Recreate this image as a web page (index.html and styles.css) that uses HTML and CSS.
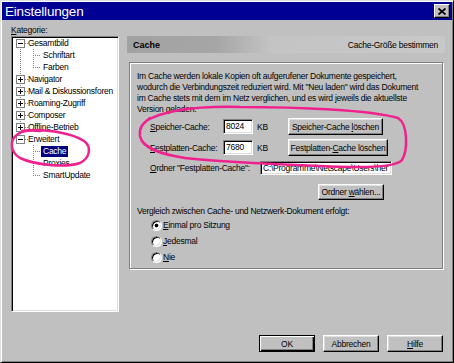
FILE: index.html
```html
<!DOCTYPE html>
<html lang="de">
<head>
    <meta charset="UTF-8">
    <title>Einstellungen</title>
    <link rel="stylesheet" href="styles.css">
</head>
<body>
<div class="window">
    <div class="titlebar">
        <span class="title">Einstellungen</span>
        <span class="close">
            <svg width="8" height="7" viewBox="0 0 8 7"><path d="M0.5 0.5 L7.5 6.5 M7.5 0.5 L0.5 6.5" stroke="#000" stroke-width="1.7"/></svg>
        </span>
    </div>

    <div class="main">
        <div class="left">
            <div class="label"><u>K</u>ategorie:</div>
            <div class="tree">
                <div class="row"><span class="gut root first"><span class="box"></span></span>Gesamtbild</div>
                <div class="row"><span class="gut line"></span><span class="gut2 mid"></span>Schriftart</div>
                <div class="row"><span class="gut line"></span><span class="gut2 last"></span>Farben</div>
                <div class="row"><span class="gut root"><span class="box plus"></span></span>Navigator</div>
                <div class="row"><span class="gut root"><span class="box plus"></span></span>Mail &amp; Diskussionsforen</div>
                <div class="row"><span class="gut root"><span class="box plus"></span></span>Roaming-Zugriff</div>
                <div class="row"><span class="gut root"><span class="box plus"></span></span>Composer</div>
                <div class="row"><span class="gut root"><span class="box plus"></span></span>Offline-Betrieb</div>
                <div class="row"><span class="gut root end"><span class="box"></span></span>Erweitert</div>
                <div class="row"><span class="gut"></span><span class="gut2 mid"></span><span class="selected">Cache</span></div>
                <div class="row"><span class="gut"></span><span class="gut2 mid"></span>Proxies</div>
                <div class="row"><span class="gut"></span><span class="gut2 last"></span>SmartUpdate</div>
            </div>
        </div>

        <div class="right">
            <div class="header">
                <b>Cache</b>
                <span>Cache-Größe bestimmen</span>
            </div>
            <div class="group">
                <div class="desc">
                    Im Cache werden lokale Kopien oft aufgerufener Dokumente gespeichert,<br>
                    wodurch die Verbindungszeit reduziert wird. Mit "Neu laden" wird das Dokument<br>
                    im Cache stets mit dem im Netz verglichen, und es wird jeweils die aktuellste<br>
                    Version geladen.
                </div>
                <div class="field first">
                    <span class="field-label"><u>S</u>peicher-Cache:</span>
                    <span class="input small">8024</span>
                    <span class="unit">KB</span>
                    <span class="btn w95"><span>Speicher-Cache <u>l</u>öschen</span></span>
                </div>
                <div class="field second">
                    <span class="field-label"><u>F</u>estplatten-Cache:</span>
                    <span class="input small">7680</span>
                    <span class="unit">KB</span>
                    <span class="btn w100"><span>Festplatten-<u>C</u>ache löschen</span></span>
                </div>
                <div class="field folder">
                    <span class="field-label wide"><u>O</u>rdner "Festplatten-Cache":</span>
                    <span class="input path">C:\Programme\Netscape\Users\her</span>
                </div>
                <div class="field choose">
                    <span class="btn w66"><span>Ordner <u>w</u>ählen...</span></span>
                </div>
                <div class="compare">Vergleich zwischen Cache- und Netzwerk-Dokument erfolgt:</div>
                <div class="option"><span class="radio checked"></span><span><u>E</u>inmal pro Sitzung</span></div>
                <div class="option"><span class="radio"></span><span><u>J</u>edesmal</span></div>
                <div class="option"><span class="radio"></span><span><u>N</u>ie</span></div>
            </div>
        </div>
    </div>

    <div class="footer">
        <span class="btn default"><span>OK</span></span>
        <span class="btn"><span>Abbrechen</span></span>
        <span class="btn"><span><u>H</u>ilfe</span></span>
    </div>
</div>

<!-- pink marker scribbles drawn over the screenshot -->
<svg class="marks" width="454" height="363" viewBox="0 0 454 363">
    <path d="M22 131 C40 128, 70 132, 84 141 C92 147, 90 158, 80 163 C65 168, 35 165, 20 158 C10 152, 9 140, 18 134 C24 130, 32 130, 40 131"/>
    <path d="M146 121 C165 110, 200 106, 240 107 C300 107, 370 110, 398 118 C408 124, 408 150, 402 160 C396 168, 360 168, 320 166 C270 164, 220 162, 185 158 C160 154, 142 148, 140 136 C139 128, 142 124, 150 118"/>
</svg>
</body>
</html>
```

FILE: styles.css
```css
* { box-sizing: border-box; }
body { margin: 0; background: #c0c0c0; font-family: "Liberation Sans", Arial, sans-serif; font-size: 8.5px; letter-spacing: -0.25px; color: #000; position: relative; }
u { text-decoration: underline; text-underline-offset: 1px; }

.window { width: 454px; height: 363px; padding: 1px; border: 1px solid; border-color: #dfdfdf #000 #000 #dfdfdf; box-shadow: inset 1px 1px #fff, inset -1px -1px #808080; display: flex; flex-direction: column; overflow: hidden; }

.titlebar { height: 18px; background: #000094; color: #fff; display: flex; align-items: center; justify-content: space-between; padding: 0 2px 0 3px; }
.title { font-size: 13.5px; letter-spacing: -0.2px; }
.close { width: 16px; height: 14px; background: #c0c0c0; border: 1px solid; border-color: #fff #000 #000 #fff; box-shadow: inset -1px -1px #808080; display: flex; align-items: center; justify-content: center; }
.close svg { display: block; }

.main { display: flex; gap: 8px; padding: 4px 7px 0 9px; }
.left { width: 108px; }
.label { line-height: 12px; height: 12px; }

.tree { height: 276px; background: #fff; border: 1px solid; border-color: #808080 #fff #fff #808080; box-shadow: inset 1px 1px #000, inset -1px -1px #dfdfdf; padding: 0 1px 0 3px; }
.row { display: flex; height: 12px; line-height: 12px; white-space: nowrap; }
.gut, .gut2 { flex: none; height: 12px; background-repeat: no-repeat; }
.gut { width: 13px; display: flex; align-items: flex-start; }
.gut2 { width: 15px; }

.gut.line { background-image: repeating-linear-gradient(#808080 0 1px, transparent 1px 2px); background-position: 5px 0; background-size: 1px 12px; }
.gut.root { background-image: repeating-linear-gradient(#808080 0 1px, transparent 1px 2px), repeating-linear-gradient(to right, #808080 0 1px, transparent 1px 2px); background-position: 5px 0, 10px 6px; background-size: 1px 12px, 3px 1px; }
.gut.root.first { background-position: 5px 6px, 10px 6px; background-size: 1px 6px, 3px 1px; }
.gut.root.end { background-position: 5px 0, 10px 6px; background-size: 1px 6px, 3px 1px; }
.gut2.mid { background-image: repeating-linear-gradient(#808080 0 1px, transparent 1px 2px), repeating-linear-gradient(to right, #808080 0 1px, transparent 1px 2px); background-position: 5px 0, 5px 6px; background-size: 1px 12px, 7px 1px; }
.gut2.last { background-image: repeating-linear-gradient(#808080 0 1px, transparent 1px 2px), repeating-linear-gradient(to right, #808080 0 1px, transparent 1px 2px); background-position: 5px 0, 5px 6px; background-size: 1px 6px, 7px 1px; }

.box { width: 9px; height: 9px; margin: 2px 0 0 1px; border: 1px solid #808080; background: #fff linear-gradient(#000, #000) center / 5px 1px no-repeat; }
.box.plus { background: linear-gradient(#000, #000) center / 5px 1px no-repeat, linear-gradient(#000, #000) center / 1px 5px no-repeat, #fff; }
.selected { background: #000080; color: #fff; padding: 0 2px; margin-left: -2px; line-height: 11px; height: 11px; margin-top: 1px; }

.right { width: 318px; margin-top: 12px; }
.header { height: 17px; display: flex; align-items: center; justify-content: space-between; padding: 0 7px 0 6px; background: linear-gradient(to right, #a2a2a2 0%, #a6a6a6 28%, #c4c4c4 46%, #c8c8c8 100%); }
.header b { font-size: 9px; letter-spacing: 0; }

.group { margin: 9px 2px 0; border: 1px solid #808080; box-shadow: inset 1px 1px #fff, 1px 1px #fff; padding: 8px 7px 3px; }
.desc { line-height: 11px; white-space: nowrap; }

.field { display: flex; align-items: center; padding-left: 13px; height: 17px; white-space: nowrap; }
.field.first { margin-top: 3px; }
.field.second { margin-top: 4px; }
.field.folder { margin-top: 5px; height: 14px; }
.field.choose { margin-top: 9px; height: 16px; padding-left: 181px; }
.field-label { width: 73px; }
.field-label.wide { width: 110px; }
.unit { width: 35px; padding-left: 4px; }

.input { background: #fff; border: 1px solid; border-color: #808080 #fff #fff #808080; box-shadow: inset 1px 1px #000, inset -1px -1px #dfdfdf; padding: 0 2px; overflow: hidden; white-space: nowrap; }
.input.small { width: 30px; height: 15px; line-height: 13px; }
.input.path { width: 132px; height: 14px; line-height: 12px; }

.btn { display: flex; align-items: center; justify-content: center; height: 17px; background: #c0c0c0; border: 1px solid; border-color: #fff #000 #000 #fff; box-shadow: inset -1px -1px #808080, inset 1px 1px #dfdfdf; white-space: nowrap; }
.btn.w95 { width: 95px; }
.btn.w100 { width: 100px; }
.btn.w66 { width: 66px; height: 16px; }
.btn.default { border-color: #000; box-shadow: inset 1px 1px #fff, inset -1px -1px #000, inset -2px -2px #808080; }

.compare { margin-top: 6px; line-height: 11px; }
.option { display: flex; align-items: center; height: 16px; padding-left: 14px; gap: 1px; }
.radio { width: 11px; height: 11px; border-radius: 50%; border: 1px solid; border-color: #808080 #fff #fff #808080; background: #fff; box-shadow: inset 1px 1px #000, inset -1px -1px #dfdfdf; }
.radio.checked { background: radial-gradient(circle, #000 0 1.6px, #fff 2.2px); }

.footer { display: flex; justify-content: flex-end; gap: 8px; margin-top: 23px; padding-right: 9px; }
.footer .btn { width: 56px; }

.marks { position: absolute; top: 0; left: 0; pointer-events: none; }
.marks path { fill: none; stroke: #f0208f; stroke-width: 2.5; stroke-linecap: round; }
```
